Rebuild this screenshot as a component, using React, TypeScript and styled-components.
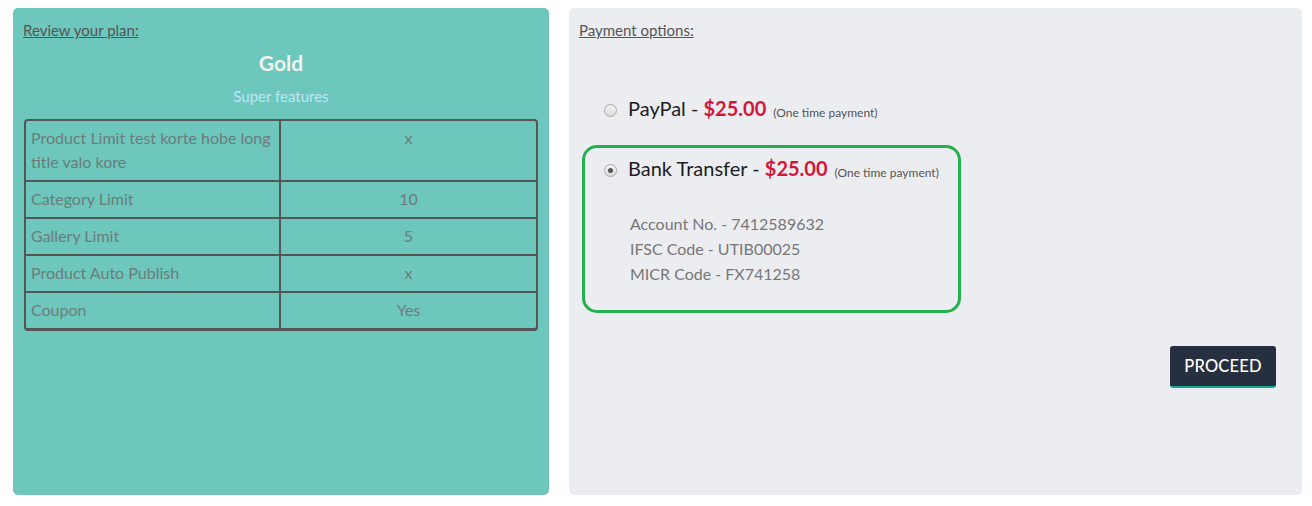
import React from "react";
import styled, { createGlobalStyle } from "styled-components";

const Global = createGlobalStyle`
  html, body { margin: 0; padding: 0; background: #ffffff; }
  body { font-family: Lato, "Open Sans", Arial, sans-serif; }
  * { box-sizing: border-box; }
`;

const Page = styled.div`
  display: flex;
  gap: 20px;
  padding: 8px 10px 0 13px;
  height: 506px;
`;

const Panel = styled.section<{ $tone: "teal" | "grey"; $w: number }>`
  width: ${(p) => p.$w}px;
  height: 487px;
  border-radius: 5px;
  padding: 11px 10px 10px;
  background: ${(p) => (p.$tone === "teal" ? "#6dc7bd" : "#ecedf1")};
  display: flex;
  flex-direction: column;
`;

const Heading = styled.div`
  font-size: 15px;
  line-height: 22px;
  color: #555;
  text-decoration: underline;
`;

const PlanName = styled.div`
  margin-top: 8px;
  text-align: center;
  font-size: 21px;
  font-weight: 700;
  line-height: 28px;
  color: #f2f2ee;
`;

const PlanSub = styled.div`
  margin-top: 8px;
  text-align: center;
  font-size: 15px;
  line-height: 22px;
  color: #bfe4f7;
`;

const Table = styled.table`
  margin: 12px 1px 0;
  border-collapse: separate;
  border-spacing: 0;
  border: 2px solid #555;
  border-bottom-width: 3px;
  border-radius: 4px;
  table-layout: fixed;
  width: calc(100% - 2px);
`;

const Cell = styled.td<{ $center?: boolean; $last?: boolean; $first?: boolean }>`
  padding: 5px 5px 6px;
  font-size: 16px;
  line-height: 24px;
  color: #6c7c79;
  vertical-align: top;
  text-align: ${(p) => (p.$center ? "center" : "left")};
  border-bottom: ${(p) => (p.$last ? "none" : "2px solid #555")};
  border-right: ${(p) => (p.$first ? "2px solid #555" : "none")};
  width: 50%;
`;

const Options = styled.div`
  margin-top: 45px;
  display: flex;
  flex-direction: column;
  gap: 11px;
`;

const OptionBox = styled.div<{ $active?: boolean }>`
  width: 379px;
  margin-left: 3px;
  border: 3px solid ${(p) => (p.$active ? "#22b14c" : "transparent")};
  border-radius: 15px;
  padding: ${(p) => (p.$active ? "8px 19px 24px" : "7px 19px")};
`;

const OptionRow = styled.label`
  display: flex;
  align-items: center;
  gap: 11px;
  height: 28px;
`;

const Radio = styled.span<{ $checked?: boolean }>`
  width: 13px;
  height: 13px;
  border-radius: 50%;
  border: 1px solid #a9a9a9;
  background: linear-gradient(#f4f4f4, #dcdcdc);
  display: flex;
  align-items: center;
  justify-content: center;
  flex-shrink: 0;
  &::after {
    content: "";
    width: 5px;
    height: 5px;
    border-radius: 50%;
    background: ${(p) => (p.$checked ? "#555" : "transparent")};
  }
`;

const OptionTitle = styled.span`
  font-size: 20px;
  line-height: 28px;
  color: #1d1d24;
  white-space: nowrap;
`;

const Price = styled.span`
  font-weight: 700;
  color: #d3173a;
`;

const Note = styled.span`
  font-size: 12px;
  color: #555;
  margin-left: 7px;
  position: relative;
  top: 1px;
`;

const Details = styled.div`
  margin: 27px 0 0 26px;
  font-size: 16px;
  line-height: 25px;
  color: #777;
`;

const Actions = styled.div`
  display: flex;
  justify-content: flex-end;
  margin-top: 33px;
  padding-right: 16px;
`;

const Button = styled.button`
  font-family: Lato, Arial, sans-serif;
  font-size: 16.5px;
  font-weight: 500;
  color: #fff;
  background: #262f3f;
  border: none;
  border-bottom: 2px solid #17a996;
  border-radius: 3px;
  width: 106px;
  height: 42px;
  padding: 0;
  letter-spacing: 0.2px;
`;

const rows: [string, string][] = [
  ["Product Limit test korte hobe long title valo kore", "x"],
  ["Category Limit", "10"],
  ["Gallery Limit", "5"],
  ["Product Auto Publish", "x"],
  ["Coupon", "Yes"],
];

export default function App() {
  return (
    <>
      <Global />
      <Page>
        <Panel $tone="teal" $w={536}>
          <Heading>Review your plan:</Heading>
          <PlanName>Gold</PlanName>
          <PlanSub>Super features</PlanSub>
          <Table>
            <tbody>
              {rows.map(([k, v], i) => (
                <tr key={k}>
                  <Cell $first $last={i === rows.length - 1}>{k}</Cell>
                  <Cell $center $last={i === rows.length - 1}>{v}</Cell>
                </tr>
              ))}
            </tbody>
          </Table>
        </Panel>
        <Panel $tone="grey" $w={733}>
          <Heading>Payment options:</Heading>
          <Options>
            <OptionBox>
              <OptionRow>
                <Radio />
                <OptionTitle>
                  PayPal - <Price>$25.00</Price>
                  <Note>(One time payment)</Note>
                </OptionTitle>
              </OptionRow>
            </OptionBox>
            <OptionBox $active>
              <OptionRow>
                <Radio $checked />
                <OptionTitle>
                  Bank Transfer - <Price>$25.00</Price>
                  <Note>(One time payment)</Note>
                </OptionTitle>
              </OptionRow>
              <Details>
                <div>Account No. - 7412589632</div>
                <div>IFSC Code - UTIB00025</div>
                <div>MICR Code - FX741258</div>
              </Details>
            </OptionBox>
          </Options>
          <Actions>
            <Button>PROCEED</Button>
          </Actions>
        </Panel>
      </Page>
    </>
  );
}
